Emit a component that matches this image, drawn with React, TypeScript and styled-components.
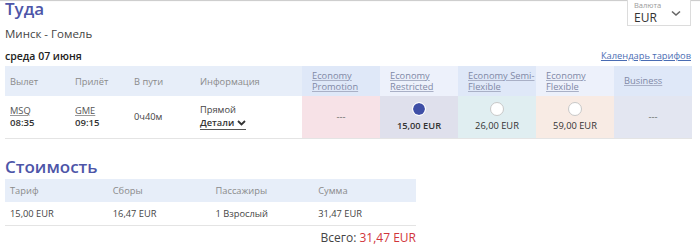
import React from "react";
import styled, { createGlobalStyle } from "styled-components";

const GlobalStyle = createGlobalStyle`
  html, body {
    margin: 0;
    padding: 0;
    background: #ffffff;
    font-family: "Open Sans", "Noto Sans", sans-serif;
    color: #444;
  }
`;

type Fare = {
  name: string;
  head: string;
  cell: string;
  price?: string;
  selected?: boolean;
};

const FARES: Fare[] = [
  { name: "Economy\nPromotion", head: "#dfe8f8", cell: "#f7e2e7" },
  { name: "Economy\nRestricted", head: "#edf1fb", cell: "#dfe0ec", price: "15,00 EUR", selected: true },
  { name: "Economy Semi-\nFlexible", head: "#dfe8f8", cell: "#e0eef1", price: "26,00 EUR" },
  { name: "Economy\nFlexible", head: "#edf1fb", cell: "#f8ebe4", price: "59,00 EUR" },
  { name: "Business", head: "#dfe8f8", cell: "#e3e6f1" },
];

const COST = [
  { label: "Тариф", value: "15,00 EUR" },
  { label: "Сборы", value: "16,47 EUR" },
  { label: "Пассажиры", value: "1 Взрослый" },
  { label: "Сумма", value: "31,47 EUR" },
];

const Page = styled.div`
  padding: 0 8px 0 5px;
  box-shadow: inset 0 2px 1px -1px #c9c9c9;
`;

const TopBar = styled.div`
  display: flex;
  justify-content: space-between;
  align-items: flex-start;
  height: 18px;
`;

const Title = styled.h2`
  margin: 0;
  font-size: 17px;
  line-height: 20px;
  font-weight: 600;
  color: #4d55a8;
`;

const MainTitle = styled(Title)`
  margin-top: -1px;
`;

const CurrencyBox = styled.div`
  width: 64px;
  height: 26px;
  box-sizing: border-box;
  margin-right: 1px;
  border: 1px solid #dcdcdc;
  border-top: none;
  padding: 0 0 0 6px;
  position: relative;
  background: #fff;
`;

const CurrencyLabel = styled.div`
  font-size: 7.5px;
  line-height: 10px;
  color: #9a9a9a;
`;

const CurrencyValue = styled.div`
  font-size: 12px;
  line-height: 15px;
  color: #333;
`;

const Chevron = styled.svg`
  position: absolute;
  right: 9px;
  top: 10px;
`;

const Route = styled.div`
  font-size: 11.5px;
  line-height: 18px;
  margin-top: 7px;
  color: #444;
`;

const DateRow = styled.div`
  display: flex;
  justify-content: space-between;
  align-items: center;
  margin-top: 4px;
  height: 17px;
`;

const DateText = styled.div`
  font-size: 10.5px;
  font-weight: 600;
  color: #222;
`;

const CalendarLink = styled.a`
  font-size: 9.3px;
  color: #4a6cb3;
  text-decoration: underline;
  margin-right: 1px;
`;

const FlightTable = styled.div`
  margin-top: 2px;
  display: grid;
  grid-template-columns: 65px 59px 66px 107px repeat(5, 1fr);
  grid-template-rows: 30px 43px;
  width: 687px;
`;

const HeadCell = styled.div<{ $bg?: string; $pad?: number }>`
  box-sizing: border-box;
  background: ${(p) => p.$bg || "#e7eef9"};
  display: flex;
  align-items: center;
  padding-left: ${(p) => p.$pad ?? 5}px;
  font-size: 9.3px;
  color: #8a8a8a;
  overflow: hidden;
`;

const FareHead = styled.a`
  font-size: 9.3px;
  line-height: 11.5px;
  white-space: pre-line;
  color: #7f88a6;
  text-decoration: underline;
  text-decoration-color: #a9b0c6;
`;

const BodyCell = styled.div<{ $bg?: string }>`
  box-sizing: border-box;
  border-bottom: 1px solid #e4e4e4;
  background: ${(p) => p.$bg || "#ffffff"};
  display: flex;
  flex-direction: column;
  justify-content: center;
  padding-left: 5px;
  font-size: 9.3px;
  line-height: 12px;
  color: #444;
`;

const FareCell = styled(BodyCell)`
  align-items: center;
  padding-left: 0;
`;

const Code = styled.span`
  color: #555;
  text-decoration: underline;
  text-decoration-color: #999;
  align-self: flex-start;
`;

const Time = styled.span`
  font-size: 9.6px;
  font-weight: 600;
  color: #333;
`;

const Details = styled.span`
  font-weight: 600;
  color: #333;
  border-bottom: 1px solid #555;
  align-self: flex-start;
  display: inline-flex;
  align-items: center;
  gap: 3px;
  line-height: 12px;
  margin-top: 1px;
`;

const Radio = styled.span<{ $on?: boolean }>`
  width: 14px;
  height: 14px;
  box-sizing: border-box;
  border-radius: 50%;
  background: #fff;
  border: ${(p) => (p.$on ? "1.5px solid #fff" : "1px solid #c8c8c8")};
  box-shadow: ${(p) => (p.$on ? "inset 0 0 0 6px #3f4fa6" : "none")};
  margin-bottom: 4px;
`;

const Price = styled.span<{ $on?: boolean }>`
  font-weight: ${(p) => (p.$on ? 600 : 400)};
  color: #333;
`;

const Dash = styled.span`
  color: #666;
`;

const CostTitle = styled(Title)`
  margin-top: 18px;
  line-height: 20px;
`;

const CostTable = styled.div`
  margin-top: 2px;
  width: 411px;
  display: grid;
  grid-template-columns: repeat(4, 1fr);
  grid-template-rows: 23px 24px;
`;

const CostHead = styled.div`
  background: #e7eef9;
  display: flex;
  align-items: center;
  padding-left: 5px;
  font-size: 9.3px;
  color: #8a8a8a;
`;

const CostCell = styled.div`
  box-sizing: border-box;
  border-bottom: 1px solid #e4e4e4;
  display: flex;
  align-items: center;
  padding-left: 5px;
  font-size: 9.3px;
  color: #444;
`;

const Total = styled.div`
  width: 411px;
  text-align: right;
  margin-top: 4px;
  font-size: 12px;
  line-height: 16px;
  color: #444;
`;

const TotalSum = styled.span`
  color: #d1353b;
`;

const Caret = () => (
  <svg width="9" height="6" viewBox="0 0 9 6">
    <path d="M1 1l3.5 3.5L8 1" fill="none" stroke="#333" strokeWidth="1.8" />
  </svg>
);

export default function App() {
  return (
    <>
      <GlobalStyle />
      <Page>
        <TopBar>
          <MainTitle>Туда</MainTitle>
          <CurrencyBox>
            <CurrencyLabel>Валюта</CurrencyLabel>
            <CurrencyValue>EUR</CurrencyValue>
            <Chevron width="10" height="7" viewBox="0 0 10 7">
              <path d="M1 1.5l4 3.5 4-3.5" fill="none" stroke="#666" strokeWidth="1.6" />
            </Chevron>
          </CurrencyBox>
        </TopBar>
        <Route>Минск - Гомель</Route>
        <DateRow>
          <DateText>среда 07 июня</DateText>
          <CalendarLink>Календарь тарифов</CalendarLink>
        </DateRow>

        <FlightTable>
          <HeadCell>Вылет</HeadCell>
          <HeadCell>Прилёт</HeadCell>
          <HeadCell>В пути</HeadCell>
          <HeadCell>Информация</HeadCell>
          {FARES.map((f) => (
            <HeadCell key={f.name} $bg={f.head} $pad={10}>
              <FareHead>{f.name}</FareHead>
            </HeadCell>
          ))}

          <BodyCell>
            <Code>MSQ</Code>
            <Time>08:35</Time>
          </BodyCell>
          <BodyCell>
            <Code>GME</Code>
            <Time>09:15</Time>
          </BodyCell>
          <BodyCell>0ч40м</BodyCell>
          <BodyCell>
            <span>Прямой</span>
            <Details>
              Детали <Caret />
            </Details>
          </BodyCell>
          {FARES.map((f) => (
            <FareCell key={f.name} $bg={f.cell}>
              {f.price ? (
                <>
                  <Radio $on={f.selected} />
                  <Price $on={f.selected}>{f.price}</Price>
                </>
              ) : (
                <Dash>---</Dash>
              )}
            </FareCell>
          ))}
        </FlightTable>

        <CostTitle>Стоимость</CostTitle>
        <CostTable>
          {COST.map((c) => (
            <CostHead key={c.label}>{c.label}</CostHead>
          ))}
          {COST.map((c) => (
            <CostCell key={c.label}>{c.value}</CostCell>
          ))}
        </CostTable>
        <Total>
          Всего: <TotalSum>31,47 EUR</TotalSum>
        </Total>
      </Page>
    </>
  );
}
